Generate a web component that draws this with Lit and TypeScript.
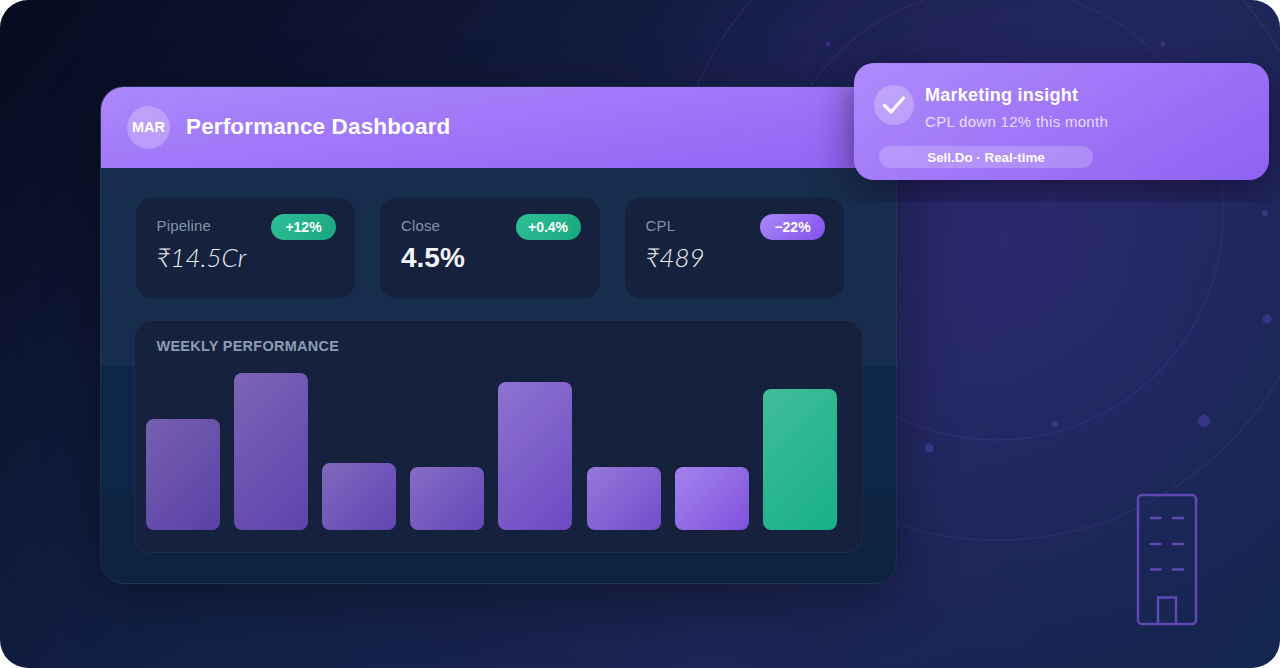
import { LitElement, html, css, svg } from 'lit';
import { customElement } from 'lit/decorators.js';

const stats = [
  { label: 'Pipeline', value: '₹14.5Cr', delta: '+12%', tone: 'green', strong: false },
  { label: 'Close', value: '4.5%', delta: '+0.4%', tone: 'green', strong: true },
  { label: 'CPL', value: '₹489', delta: '−22%', tone: 'purple', strong: false },
];

const bars = [
  { h: 111, o: 0.66 },
  { h: 157, o: 0.7 },
  { h: 67, o: 0.74 },
  { h: 63, o: 0.78 },
  { h: 148, o: 0.84 },
  { h: 63, o: 0.9 },
  { h: 63, o: 1 },
  { h: 141, o: 1, accent: true },
];

const dots = [
  [828, 44, 2.5], [1163, 44, 2.5], [1265, 213, 3], [1267, 319, 4.5],
  [1204, 421, 6], [1055, 424, 3], [929, 448, 4.5],
];

@customElement('app-root')
export class AppRoot extends LitElement {
  static styles = css`
    :host {
      display: block;
      width: 1280px;
      height: 668px;
      background: #fff;
      font-family: 'Liberation Sans', Arial, sans-serif;
    }
    .stage {
      position: relative;
      box-sizing: border-box;
      width: 1280px;
      height: 668px;
      padding: 85.5px 0 0 99.5px;
      border-radius: 28px;
      overflow: hidden;
      background:
        radial-gradient(circle 430px at 1000px 240px, rgba(62, 50, 150, 0.42), rgba(62, 50, 150, 0) 100%),
        radial-gradient(circle 500px at 200px 668px, rgba(16, 44, 84, 0.35), rgba(16, 44, 84, 0) 100%),
        linear-gradient(128deg, #060c1e 0%, #121a3e 35%, #1c2554 68%, #14264f 100%);
    }
    .decor {
      position: absolute;
      inset: 0;
    }
    .shadow {
      position: absolute;
      left: 99.5px;
      top: 85.5px;
      width: 797px;
      height: 498px;
      border-radius: 24px;
      box-shadow: 0 14px 56px rgba(0, 0, 0, 0.36);
    }
    .panel {
      position: relative;
      box-sizing: border-box;
      width: 797px;
      height: 498px;
      border: 1px solid rgba(255, 255, 255, 0.05);
      border-radius: 24px;
      overflow: hidden;
      background: linear-gradient(
        180deg,
        #172d4d 0,
        #172d4d 279px,
        #0c2846 279px,
        #0c2846 408px,
        #0e2341 408px
      );
    }
    .head {
      display: flex;
      align-items: center;
      gap: 16px;
      height: 81px;
      padding-left: 26.5px;
      background: linear-gradient(172deg, #ab88fb 0%, #9364f5 100%);
    }
    .avatar {
      display: flex;
      align-items: center;
      justify-content: center;
      width: 43px;
      height: 43px;
      border-radius: 50%;
      background: rgba(255, 255, 255, 0.25);
      color: #fff;
      font-size: 14.5px;
      font-weight: 700;
    }
    .title {
      margin-top: -1px;
      color: #fff;
      font-size: 22.5px;
      font-weight: 700;
      letter-spacing: 0.15px;
    }
    .stats {
      display: grid;
      grid-template-columns: repeat(3, 219.5px);
      gap: 25px;
      padding: 30px 0 0 35px;
    }
    .stat {
      box-sizing: border-box;
      position: relative;
      height: 100px;
      padding: 18px 0 0 21px;
      border-radius: 16px;
      background: #16213d;
    }
    .label {
      color: #8593a8;
      font-size: 15px;
      letter-spacing: 0.15px;
      line-height: 20px;
    }
    .value {
      margin-top: 4px;
      color: #eef1f6;
      font-family: Lato, sans-serif;
      font-size: 26px;
      font-style: italic;
      font-weight: 300;
      line-height: 34px;
    }
    .value.strong {
      margin-top: 5px;
      color: #f1f4f8;
      font-family: 'Liberation Sans', Arial, sans-serif;
      font-size: 28px;
      font-style: normal;
      font-weight: 700;
    }
    .delta {
      position: absolute;
      top: 16px;
      right: 19px;
      width: 65px;
      height: 26px;
      border-radius: 13px;
      color: #fff;
      font-size: 14px;
      font-weight: 700;
      line-height: 26px;
      text-align: center;
    }
    .delta.green {
      background: linear-gradient(135deg, #2fc096, #18a67f);
    }
    .delta.purple {
      background: linear-gradient(135deg, #a988f8, #8152ec);
    }
    .chart {
      box-sizing: border-box;
      width: 729px;
      height: 233px;
      margin: 22px 0 0 33px;
      padding: 16px 24.5px 0 11px;
      border: 1px solid rgba(255, 255, 255, 0.05);
      border-radius: 18px;
      background: #16213d;
    }
    .chart-title {
      padding-left: 11px;
      color: #8b9db3;
      font-size: 14.5px;
      font-weight: 700;
      letter-spacing: 0.25px;
      line-height: 18px;
    }
    .bars {
      display: flex;
      align-items: flex-end;
      justify-content: space-between;
      height: 175px;
    }
    .bar {
      width: 74px;
      border-radius: 8px;
      background: linear-gradient(135deg, #a582ec, #7c52dc);
    }
    .bar.accent {
      background: linear-gradient(135deg, #40bd99, #17b088);
    }
    .note-clip {
      position: absolute;
      left: 780px;
      top: 0;
      width: 500px;
      height: 202px;
      overflow: hidden;
    }
    .note {
      position: absolute;
      box-sizing: border-box;
      left: 74px;
      top: 63px;
      width: 415px;
      height: 117px;
      padding: 22px 0 0 20px;
      border-radius: 20px;
      background: linear-gradient(150deg, #ae8bfc 0%, #9061f3 100%);
      box-shadow: 0 12px 40px rgba(20, 8, 40, 0.6);
    }
    .note-top {
      display: flex;
      gap: 11px;
    }
    .check {
      display: flex;
      align-items: center;
      justify-content: center;
      width: 40px;
      height: 40px;
      border-radius: 50%;
      background: rgba(255, 255, 255, 0.25);
    }
    .note-title {
      color: #fff;
      font-size: 18px;
      font-weight: 700;
      letter-spacing: 0.25px;
      line-height: 21px;
    }
    .note-text {
      margin-top: 7px;
      color: rgba(255, 255, 255, 0.76);
      font-size: 15px;
      letter-spacing: 0.3px;
      line-height: 18px;
    }
    .pill {
      width: 214px;
      height: 22px;
      margin: 15px 0 0 5px;
      border-radius: 11px;
      background: rgba(255, 255, 255, 0.2);
      color: #fff;
      font-size: 13.4px;
      font-weight: 700;
      line-height: 23px;
      text-align: center;
    }
  `;

  private renderDecor() {
    return html`
      <svg class="decor" width="1280" height="668" viewBox="0 0 1280 668" fill="none">
        ${[226, 326].map(
          r => svg`<circle cx="997" cy="214" r=${r} stroke="rgba(130,110,230,0.12)" stroke-width="1.5"></circle>`
        )}
        ${dots.map(
          ([x, y, r]) => svg`<circle cx=${x} cy=${y} r=${r} fill="rgba(120,90,230,0.3)"></circle>`
        )}
        <g stroke="#5f49b4" stroke-width="2.5" stroke-linecap="round">
          <rect x="1138" y="495" width="58" height="129" rx="4"></rect>
          <path d="M1158 624V597.5H1176V624"></path>
          <path d="M1151 518H1160.5M1173 518H1183M1151 544H1160.5M1173 544H1183M1151 569.5H1160.5M1173 569.5H1183"></path>
        </g>
      </svg>
    `;
  }

  render() {
    return html`
      <div class="stage">
        ${this.renderDecor()}
        <div class="shadow"></div>
        <div class="panel">
          <div class="head">
            <div class="avatar">MAR</div>
            <div class="title">Performance Dashboard</div>
          </div>
          <div class="stats">
            ${stats.map(s => html`
              <div class="stat">
                <div class="label">${s.label}</div>
                <div class="value ${s.strong ? 'strong' : ''}">${s.value}</div>
                <div class="delta ${s.tone}">${s.delta}</div>
              </div>
            `)}
          </div>
          <div class="chart">
            <div class="chart-title">WEEKLY PERFORMANCE</div>
            <div class="bars">
              ${bars.map(b => html`
                <div
                  class="bar ${b.accent ? 'accent' : ''}"
                  style="height:${b.h}px;opacity:${b.o}"
                ></div>
              `)}
            </div>
          </div>
        </div>
        <div class="note-clip">
          <div class="note">
            <div class="note-top">
              <div class="check">
                <svg width="24" height="24" viewBox="0 0 24 24" fill="none">
                  <path d="M2.5 12.5L9 19L21.5 5" stroke="#fff" stroke-width="3.2" stroke-linecap="round" stroke-linejoin="round"></path>
                </svg>
              </div>
              <div>
                <div class="note-title">Marketing insight</div>
                <div class="note-text">CPL down 12% this month</div>
              </div>
            </div>
            <div class="pill">Sell.Do · Real-time</div>
          </div>
        </div>
      </div>
    `;
  }
}
